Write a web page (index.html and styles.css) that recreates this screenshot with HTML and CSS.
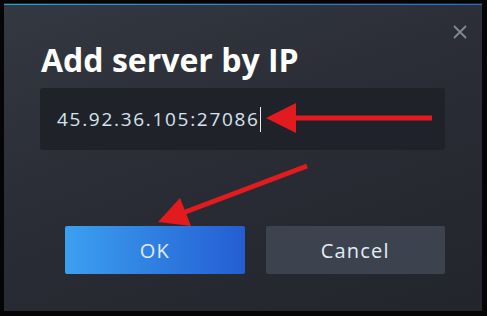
FILE: index.html
```html
<!DOCTYPE html>
<html lang="en">
<head>
    <meta charset="UTF-8">
    <title>Add server by IP</title>
    <link rel="stylesheet" href="styles.css">
</head>
<body>
    <div class="dialog">
        <button class="close-btn" aria-label="Close">
            <svg width="16" height="16" viewBox="0 0 16 16">
                <path d="M2 2 L14 14 M14 2 L2 14" stroke="#7f8c91" stroke-width="1.8" fill="none"/>
            </svg>
        </button>

        <h1 class="title">Add server by IP</h1>

        <div class="ip-field">
            <span class="ip-value">45.92.36.105:27086</span><span class="caret"></span>
        </div>

        <div class="actions">
            <button class="btn btn-ok">OK</button>
            <button class="btn btn-cancel">Cancel</button>
        </div>
    </div>

    <!-- annotation arrows drawn over the screenshot -->
    <svg class="annotations" width="487" height="316" viewBox="0 0 487 316">
        <line x1="432" y1="118" x2="290" y2="118" stroke="#e31b1e" stroke-width="5"/>
        <polygon points="266,118 296,103 296,133" fill="#e31b1e"/>
        <line x1="307" y1="166" x2="180" y2="214" stroke="#e31b1e" stroke-width="5"/>
        <polygon points="158,222 180,198 191,226" fill="#e31b1e"/>
    </svg>
</body>
</html>
```

FILE: styles.css
```css
body {
    margin: 0;
    background-color: #050506;
    font-family: 'Open Sans', 'Noto Sans', sans-serif;
    width: 487px;
    height: 316px;
    overflow: hidden;
}
.dialog {
    position: relative;
    box-sizing: border-box;
    width: 478px;
    height: 308px;
    margin: 3px 0 0 4px;
    padding: 30px 37px 0 36px;
    border-top: 1px solid transparent;
    background:
        linear-gradient(90deg, #1aa6d8, #2b66de) top / 100% 1px no-repeat,
        linear-gradient(160deg, #343841 0%, #2a2d35 45%, #22252c 100%);
    display: flex;
    flex-direction: column;
}
.close-btn {
    position: absolute;
    top: 20px;
    right: 14px;
    background: none;
    border: none;
    padding: 0;
    width: 16px;
    height: 16px;
    cursor: pointer;
}
.title {
    margin: 0 0 0 1px;
    font-family: 'Open Sans', sans-serif;
    font-weight: 700;
    font-size: 32px;
    line-height: 52px;
    color: #ffffff;
    letter-spacing: 0;
}
.ip-field {
    margin-top: 2px;
    height: 62px;
    box-sizing: border-box;
    border-radius: 3px;
    background-color: #1f2229;
    padding: 0 16px 0 17px;
    display: flex;
    align-items: center;
}
.ip-value {
    color: #d6e4ee;
    font-size: 19px;
    letter-spacing: 1.7px;
}
.caret {
    display: inline-block;
    width: 1px;
    height: 25px;
    margin-left: 0;
    background-color: #e8eef2;
}
.actions {
    display: flex;
    gap: 21px;
    margin-top: 76px;
    padding-left: 25px;
}
.btn {
    width: 180px;
    height: 48px;
    border: none;
    border-radius: 2px;
    font-family: 'Open Sans', sans-serif;
    font-size: 20px;
    letter-spacing: 1.2px;
    color: #e4ecf4;
    cursor: pointer;
}
.btn-ok {
    background: linear-gradient(90deg, #3ba0f0, #245dd2);
}
.btn-cancel {
    background-color: #3d434e;
}
.annotations {
    position: absolute;
    top: 0;
    left: 0;
    pointer-events: none;
}
```
